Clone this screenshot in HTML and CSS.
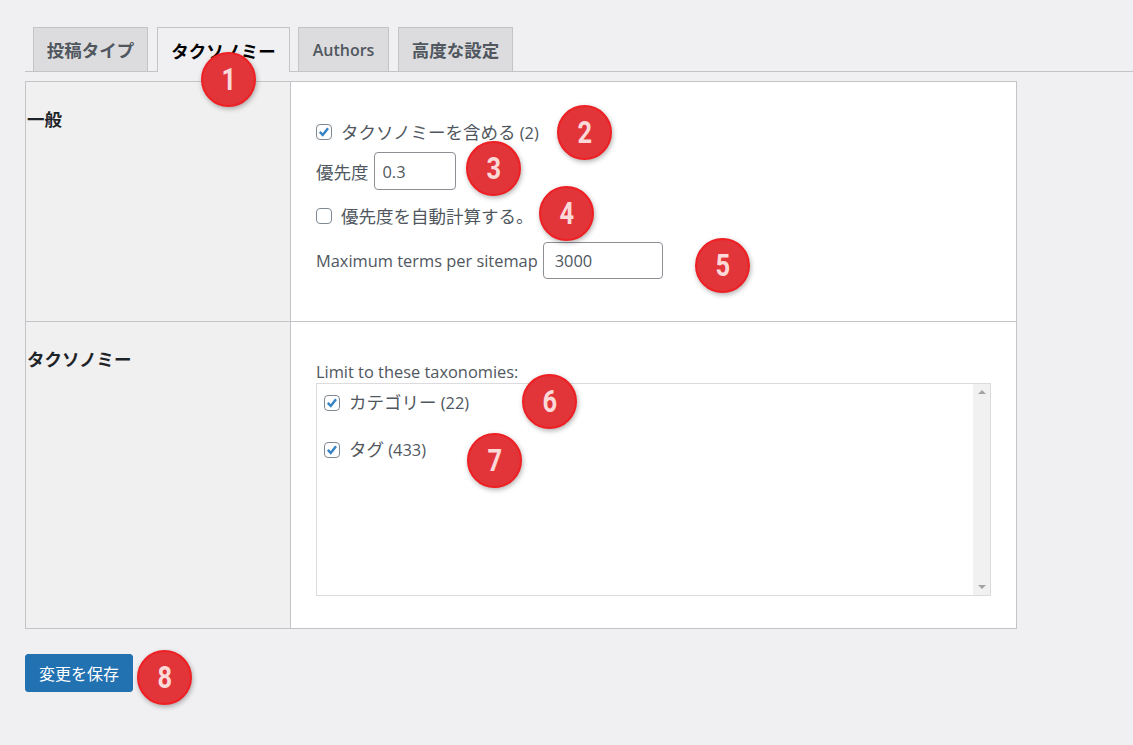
FILE: index.html
```html
<!DOCTYPE html>
<html lang="ja">
  <head>
    <meta charset="UTF-8" />
    <title>タクソノミー</title>
    <link rel="stylesheet" href="styles.css">
  </head>
  <body>
    <!-- Tabs -->
    <div class="tabs">
      <a class="tab ja">投稿タイプ</a>
      <a class="tab ja active">タクソノミー</a>
      <a class="tab">Authors</a>
      <a class="tab ja">高度な設定</a>
    </div>

    <div class="panel">
      <div class="row row-general">
        <div class="head ja">一般</div>
        <div class="body general">
          <label class="check line-include">
            <span class="box on"><svg viewBox="0 0 16 16"><path d="M3.2 7.8 6.6 11.4 12.6 3.8" /></svg></span>
            <span><span class="ja">タクソノミーを含める</span> (2)</span>
          </label>
          <div class="field line-priority">
            <span class="ja">優先度</span>
            <input class="input input-small" type="text" value="0.3" />
          </div>
          <label class="check line-auto">
            <span class="box"></span>
            <span class="ja">優先度を自動計算する。</span>
          </label>
          <div class="field line-max">
            <span>Maximum terms per sitemap</span>
            <input class="input input-large" type="text" value="3000" />
          </div>
        </div>
      </div>

      <div class="row row-tax">
        <div class="head ja">タクソノミー</div>
        <div class="body tax">
          <div class="limit">Limit to these taxonomies:</div>
          <div class="listbox">
            <div class="items">
              <label class="check item-cat">
                <span class="box on"><svg viewBox="0 0 16 16"><path d="M3.2 7.8 6.6 11.4 12.6 3.8" /></svg></span>
                <span><span class="ja">カテゴリー</span> (22)</span>
              </label>
              <label class="check item-tag">
                <span class="box on"><svg viewBox="0 0 16 16"><path d="M3.2 7.8 6.6 11.4 12.6 3.8" /></svg></span>
                <span><span class="ja">タグ</span> (433)</span>
              </label>
            </div>
            <div class="scrollbar">
              <span class="arrow up"></span>
              <span class="arrow down"></span>
            </div>
          </div>
        </div>
      </div>
    </div>

    <button class="save">変更を保存</button>

    <!-- Numbered callouts -->
    <div class="marker m1"><span>1</span></div>
    <div class="marker m2"><span>2</span></div>
    <div class="marker m3"><span>3</span></div>
    <div class="marker m4"><span>4</span></div>
    <div class="marker m5"><span>5</span></div>
    <div class="marker m6"><span>6</span></div>
    <div class="marker m7"><span>7</span></div>
    <div class="marker m8"><span>8</span></div>
  </body>
</html>
```

FILE: styles.css
```css
* {
  box-sizing: border-box;
}
html,
body {
  height: 745px;
  overflow: hidden;
}
body {
  margin: 0;
  padding: 27px 0 0 25px;
  position: relative;
  background-color: #f0f0f3;
  color: #50575e;
  font-family: "Open Sans", "Noto Sans CJK JP", sans-serif;
  font-size: 16.4px;
}
.ja {
  font-family: "Noto Sans CJK JP", sans-serif;
  font-size: 17.5px;
}

/* Tabs */
.tabs {
  display: flex;
  height: 45px;
  padding-left: 8px;
  gap: 9px;
  border-bottom: 1px solid #c3c4c7;
}
.tab {
  height: 44px;
  display: flex;
  align-items: center;
  justify-content: center;
  background-color: #dcdcde;
  border: 1px solid #c3c4c7;
  border-bottom: none;
  color: #50575e;
  font-weight: 600;
  white-space: nowrap;
}
.tab:nth-child(1) {
  width: 115px;
}
.tab:nth-child(2) {
  width: 133px;
}
.tab:nth-child(3) {
  width: 91px;
  margin-left: -1px;
  font-size: 16px;
}
.tab:nth-child(4) {
  width: 115px;
}
.tab.active {
  height: 45px;
  background-color: #f0f0f3;
  color: #000;
}

/* Settings table */
.panel {
  width: 992px;
  margin-top: 9px;
  background-color: #fff;
  border: 1px solid #c3c4c7;
}
.row {
  display: flex;
}
.row-general {
  height: 240px;
  border-bottom: 1px solid #c3c4c7;
}
.row-tax {
  height: 306px;
}
.head {
  width: 265px;
  flex-shrink: 0;
  padding: 26px 0 0 1px;
  background-color: #f0f0f1;
  border-right: 1px solid #c3c4c7;
  color: #1d2327;
  font-weight: 700;
  line-height: 22px;
}
.body {
  flex: 1;
  padding-left: 25px;
}
.general {
  padding-top: 38px;
}
.check {
  display: flex;
  align-items: center;
  gap: 9px;
  line-height: 24px;
}
.box {
  width: 16px;
  height: 16px;
  flex-shrink: 0;
  background-color: #fff;
  border: 1px solid #7e8993;
  border-radius: 4px;
}
.box svg {
  display: block;
  width: 14px;
  height: 14px;
}
.box path {
  fill: none;
  stroke: #3582c4;
  stroke-width: 2.8;
}
.line-include {
  height: 24px;
}
.field {
  display: flex;
  align-items: center;
  gap: 5px;
}
.line-priority {
  margin-top: 8px;
}
.line-auto {
  margin-top: 14px;
}
.line-max {
  margin-top: 14px;
}
.input {
  height: 38px;
  padding: 0 8px;
  background-color: #fff;
  border: 1px solid #8c8f94;
  border-radius: 4px;
  color: #50575e;
  font-family: inherit;
  font-size: 16.4px;
}
.input-small {
  width: 82px;
}
.input-large {
  width: 120px;
  height: 37px;
  padding: 0 11px;
}

/* Taxonomy list */
.tax {
  padding-top: 39px;
  padding-right: 25px;
}
.limit {
  height: 22px;
  line-height: 22px;
}
.listbox {
  display: flex;
  height: 213px;
  border: 1px solid #dcdcde;
}
.items {
  flex: 1;
  padding: 6px 0 0 7px;
}
.item-tag {
  margin-top: 22px;
}
.scrollbar {
  width: 17px;
  padding: 6px 0;
  display: flex;
  flex-direction: column;
  justify-content: space-between;
  align-items: center;
  background-color: #f1f1f1;
}
.arrow {
  width: 0;
  height: 0;
  border-left: 4px solid transparent;
  border-right: 4px solid transparent;
}
.arrow.up {
  border-bottom: 4px solid #a3a3a3;
}
.arrow.down {
  border-top: 4px solid #a3a3a3;
}

/* Save button */
.save {
  display: block;
  width: 108px;
  height: 38px;
  margin-top: 25px;
  padding: 0;
  background-color: #2271b1;
  border: 1px solid #2271b1;
  border-radius: 3px;
  color: #fff;
  font-family: "Noto Sans CJK JP", sans-serif;
  font-size: 16px;
}

/* Callouts */
.marker {
  position: absolute;
  width: 55px;
  height: 55px;
  display: flex;
  align-items: center;
  justify-content: center;
  background-color: #e23539;
  border: 2px solid #ee2024;
  border-radius: 50%;
  box-shadow: 1px 2px 5px rgba(0, 0, 0, 0.3);
  color: #fcd9d9;
  font-family: "Roboto", sans-serif;
  font-size: 31px;
  font-weight: 700;
}
.marker span {
  display: block;
  transform: scaleX(0.82);
}
.m1 {
  left: 201px;
  top: 52px;
}
.m2 {
  left: 557px;
  top: 105px;
}
.m3 {
  left: 466px;
  top: 141px;
}
.m4 {
  left: 539px;
  top: 186px;
}
.m5 {
  left: 695px;
  top: 238px;
}
.m6 {
  left: 522px;
  top: 374px;
}
.m7 {
  left: 467px;
  top: 433px;
}
.m8 {
  left: 137px;
  top: 650px;
}
```
